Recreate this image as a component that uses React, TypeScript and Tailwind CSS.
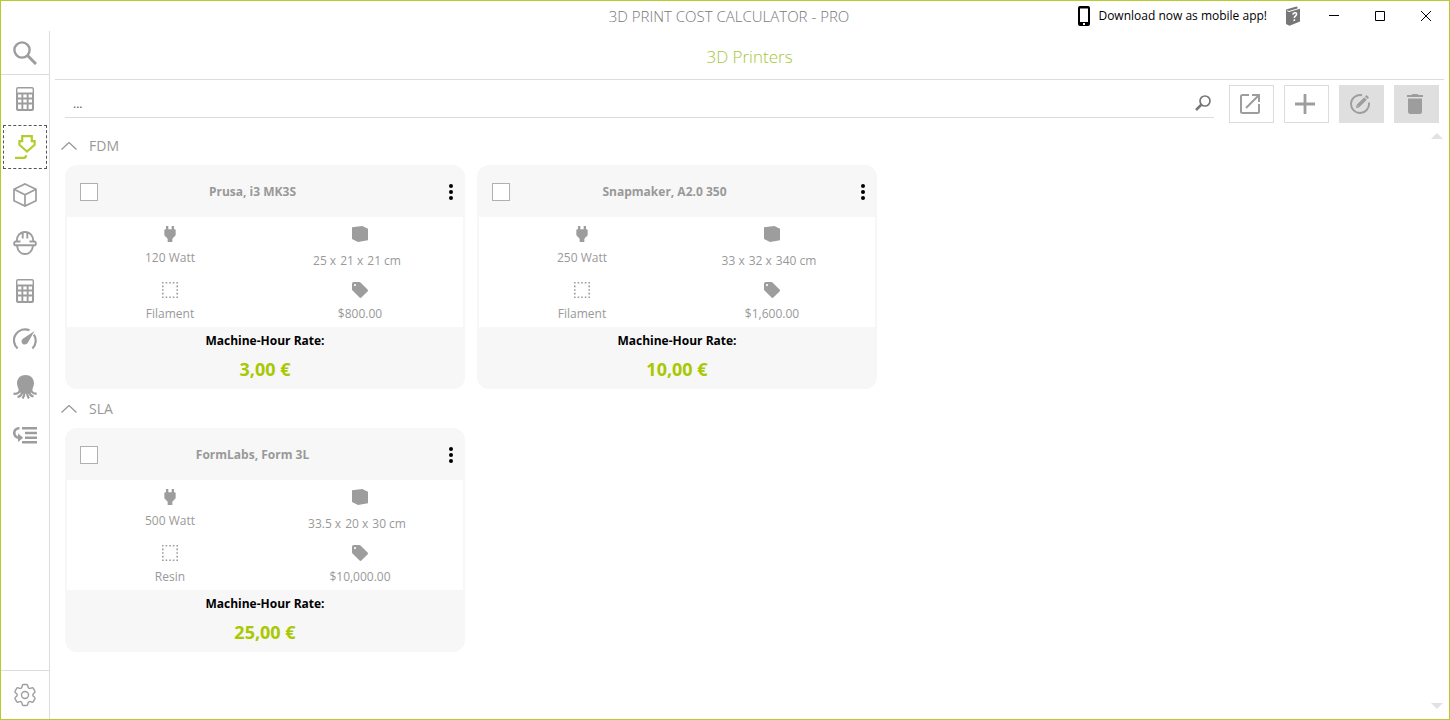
import React from "react";
import { HiOutlineCog6Tooth } from "react-icons/hi2";

interface Printer {
  name: string;
  power: string;
  size: string[];
  material: string;
  price: string;
  rate: string;
}

const groups: { title: string; printers: Printer[] }[] = [
  {
    title: "FDM",
    printers: [
      {
        name: "Prusa, i3 MK3S",
        power: "120 Watt",
        size: ["25 x", "21 x", "21 cm"],
        material: "Filament",
        price: "$800.00",
        rate: "3,00 €",
      },
      {
        name: "Snapmaker, A2.0 350",
        power: "250 Watt",
        size: ["33 x", "32 x", "340 cm"],
        material: "Filament",
        price: "$1,600.00",
        rate: "10,00 €",
      },
    ],
  },
  {
    title: "SLA",
    printers: [
      {
        name: "FormLabs, Form 3L",
        power: "500 Watt",
        size: ["33.5 x", "20 x", "30 cm"],
        material: "Resin",
        price: "$10,000.00",
        rate: "25,00 €",
      },
    ],
  },
];

const Icon = ({
  children,
  className = "size-6",
}: {
  children: React.ReactNode;
  className?: string;
}) => (
  <svg viewBox="0 0 24 24" fill="none" className={className} aria-hidden="true">
    {children}
  </svg>
);

const SearchIcon = () => (
  <Icon>
    <circle cx="9" cy="9" r="7.6" stroke="currentColor" strokeWidth="2.4" />
    <path d="M14.5 14.5 23 23" stroke="currentColor" strokeWidth="3" />
  </Icon>
);

const CalculatorIcon = () => (
  <Icon>
    <path
      fill="currentColor"
      fillRule="evenodd"
      d="M5 0h14a2 2 0 0 1 2 2v20a2 2 0 0 1-2 2H5a2 2 0 0 1-2-2V2a2 2 0 0 1 2-2Zm0 1.4a.6.6 0 0 0-.6.6v3.6h15.2V2a.6.6 0 0 0-.6-.6ZM5 7.5v3h3.4v-3Zm5.3 0v3h3.4v-3Zm5.3 0v3H19v-3ZM5 12.4v3h3.4v-3Zm5.3 0v3h3.4v-3Zm5.3 0v3H19v-3ZM5 17.5V21a1 1 0 0 0 1 1h2.4v-4.5Zm5.3 0V22h3.4v-4.5Zm5.3 0V22H18a1 1 0 0 0 1-1v-3.5Z"
    />
  </Icon>
);

const NozzleIcon = () => (
  <Icon>
    <path
      d="M9.2 1.1h9.600v5h2.800v3.700L14 16.500l-7.600-6.700V6.100h2.800Z"
      stroke="currentColor"
      strokeWidth="2.200"
    />
    <path d="M2 22.900h8.500c1.700 0 2.500-1 2.800-2.700" stroke="currentColor" strokeWidth="2.200" />
  </Icon>
);

const CubeIcon = () => (
  <Icon>
    <path
      d="M12 .9 23 6.2v11.5l-11 5.4-11-5.4V6.2ZM1 6.2l11 5.5 11-5.5M12 11.700v11.400"
      stroke="currentColor"
      strokeWidth="1.700"
    />
  </Icon>
);

const WorkerIcon = () => (
  <Icon>
    <path
      d="M3.600 10.500C3.600 5 7 1 12 1s8.400 4 8.400 9.500M9.700 1.500v6M14.300 1.500v6"
      stroke="currentColor"
      strokeWidth="1.900"
    />
    <path
      d="M7.500 10.500H3c-2.500 0-2.500 3.800 0 3.800h18c2.500 0 2.500-3.800 0-3.800h-4.500M4 14.800c.7 5 3.900 8.200 8 8.200s7.300-3.200 8-8.200"
      stroke="currentColor"
      strokeWidth="1.900"
    />
  </Icon>
);

const GaugeIcon = () => (
  <Icon>
    <path
      d="M4.600 21.500A11 11 0 0 1 16.500 3.300M20.900 7.600a11 11 0 0 1-1.500 13.900"
      stroke="currentColor"
      strokeWidth="2.200"
    />
    <path
      d="M21.500 4 15 15.600c-1 2-3.500 2.600-5.200 1.300-1.700-1.300-1.700-3.900 0-5.200Z"
      fill="currentColor"
    />
  </Icon>
);

const OctopusIcon = () => (
  <Icon>
    <path
      fill="currentColor"
      d="M12.500 0C17.500 0 21 3.500 21 8.200c0 3-1.600 4.500-1.600 6.800l-2.400 3.500h-9L5.600 15C5.600 12.700 4 11.200 4 8.200 4 3.500 7.500 0 12.500 0Z"
    />
    <path
      d="M7 15c-.8 3-3 4.200-6.500 3.700M9.500 16c-.5 3.500-2 5.500-5 6M11.500 16.500c.2 3-.5 5-2 7M14 16.500c-.2 3 .5 5 2 7M16 16c.5 3.500 1.700 5 4.500 5.500M18 15c.8 2.500 2.500 3.900 5.700 3.700"
      stroke="currentColor"
      strokeWidth="2.200"
    />
  </Icon>
);

const QueueIcon = () => (
  <Icon>
    <path
      d="M9 5.300h15M12 10h12M12 14.700h12M9 19.300h15"
      stroke="currentColor"
      strokeWidth="2.600"
    />
    <path d="M6.500 5.300C-.5 4.800-.5 15.200 6.500 14.700" stroke="currentColor" strokeWidth="2.600" />
    <path d="M5 10.500v8.500l5.200-4.200Z" fill="currentColor" />
  </Icon>
);

const navItems = [
  { label: "Calculator", icon: <CalculatorIcon /> },
  { label: "3D Printers", icon: <NozzleIcon />, active: true },
  { label: "Materials", icon: <CubeIcon /> },
  { label: "Workers", icon: <WorkerIcon /> },
  { label: "Calculations", icon: <CalculatorIcon /> },
  { label: "Dashboard", icon: <GaugeIcon /> },
  { label: "OctoPrint", icon: <OctopusIcon /> },
  { label: "Queue", icon: <QueueIcon /> },
];

const TitleBar = () => (
  <header className="grid h-[30px] shrink-0 grid-cols-[1fr_auto_1fr] items-center">
    <span />
    <h1 className="pl-2 text-[15px] font-light text-[#777777]">
      3D PRINT COST CALCULATOR - PRO
    </h1>
    <div className="flex h-full items-center justify-end text-black">
      <a href="#mobile" className="flex items-center gap-2 text-xs">
        <svg viewBox="0 0 12 20" className="h-5 w-3" aria-hidden="true">
          <path
            fill="currentColor"
            fillRule="evenodd"
            d="M2 0h8a2 2 0 0 1 2 2v16a2 2 0 0 1-2 2H2a2 2 0 0 1-2-2V2a2 2 0 0 1 2-2Zm0 2.500v13.500h8V2.500Zm3 14.500v2h2v-2Z"
          />
        </svg>
        Download now as mobile app!
      </a>
      <button aria-label="Help" className="ml-4 flex w-5 justify-center text-[#777777]">
        <svg viewBox="0 0 16 20" className="h-5 w-4" aria-hidden="true">
          <path
            fill="currentColor"
            d="M1 3.500 11.500.5l1 .5v1.500L4 5l-2-.700v.8l2 .8L15 2.800v12.700L4.500 19.800 1 18Z"
          />
          <path
            d="M7.800 8.700c.4-2 3.800-2.800 3.800-.6 0 1.800-2.300 1.700-2.300 4"
            stroke="white"
            strokeWidth="1.500"
            fill="none"
          />
          <path d="m8.500 13.600 1.600-.5v1.600l-1.600.5Z" fill="white" />
        </svg>
      </button>
      <div className="ml-2 flex h-full">
        <button aria-label="Minimize" className="grid h-full w-[46px] place-items-center">
          <svg viewBox="0 0 10 10" className="size-[10px]" stroke="currentColor">
            <path d="M0 4.500h10" />
          </svg>
        </button>
        <button aria-label="Maximize" className="grid h-full w-[46px] place-items-center">
          <svg viewBox="0 0 10 10" className="size-[10px]" stroke="currentColor" fill="none">
            <path d="M.5.5h9v9h-9Z" />
          </svg>
        </button>
        <button aria-label="Close" className="grid h-full w-[46px] place-items-center">
          <svg viewBox="0 0 10 10" className="size-[10px]" stroke="currentColor">
            <path d="m0 0 10 10M10 0 0 10" />
          </svg>
        </button>
      </div>
    </div>
  </header>
);

const Sidebar = () => (
  <nav className="flex w-[49px] shrink-0 flex-col border-r border-[#dcdcdc] text-[#9d9d9d]">
    <button
      aria-label="Search"
      className="grid h-11 place-items-center border-b border-[#dcdcdc]"
    >
      <SearchIcon />
    </button>
    <div className="flex flex-1 flex-col">
      {navItems.map((item) => (
        <button
          key={item.label}
          aria-label={item.label}
          className={
            item.active
              ? "m-[2px] grid h-11 place-items-center border border-dashed border-[#555555] text-[#b5cc2e]"
              : "grid h-12 place-items-center"
          }
        >
          {item.icon}
        </button>
      ))}
    </div>
    <button
      aria-label="Settings"
      className="grid h-[49px] place-items-center border-t border-[#dcdcdc]"
    >
      <HiOutlineCog6Tooth className="size-7" strokeWidth={1.2} />
    </button>
  </nav>
);

const Toolbar = () => (
  <div className="flex items-center gap-[10px] pt-[5px] pr-[10px] pl-[15px]">
    <div className="mr-[5px] flex h-[33px] flex-1 items-center self-start border-b border-[#dcdcdc] pt-1 pr-[3px] pl-1 text-[#777777]">
      <input
        aria-label="Search printers"
        placeholder="..."
        className="min-w-0 flex-1 bg-transparent px-1 pt-[2px] text-xs outline-none placeholder:text-[#555555]"
      />
      <button aria-label="Start search" className="-scale-x-100">
        <svg viewBox="0 0 16 16" className="size-4" fill="none" stroke="currentColor">
          <circle cx="6" cy="6" r="5" strokeWidth="1.700" />
          <path d="m9.500 9.500 5.500 5.500" strokeWidth="2.500" />
        </svg>
      </button>
    </div>
    <button
      aria-label="Export"
      className="grid h-[38px] w-[45px] place-items-center border border-[#dcdcdc] pr-[3px] text-[#9d9d9d]"
    >
      <svg viewBox="0 0 20 20" className="size-5" fill="none" stroke="currentColor">
        <path d="M9 1H2.500Q1 1 1 2.500v15Q1 19 2.500 19h15q1.500 0 1.500-1.500V10" strokeWidth="2" />
        <path d="M12 1h7v7M19 1 6 14" strokeWidth="2" />
      </svg>
    </button>
    <button
      aria-label="Add printer"
      className="grid h-[38px] w-[45px] place-items-center border border-[#dcdcdc] pr-[3px] text-[#9d9d9d]"
    >
      <svg viewBox="0 0 20 20" className="size-5" stroke="currentColor">
        <path d="M10 0v20M0 10h20" strokeWidth="2.800" />
      </svg>
    </button>
    <button
      disabled
      aria-label="Edit printer"
      className="grid h-[38px] w-[45px] place-items-center bg-[#dfdfdf] pr-[3px] text-[#9d9d9d]"
    >
      <svg viewBox="0 0 20 20" className="size-5" fill="none" stroke="currentColor">
        <path d="M12 1.200A9 9 0 1 0 18.900 8.500" strokeWidth="1.900" />
        <path d="m8 12 7.500-7.500" strokeWidth="3.600" />
        <path d="m16.300 3.700 1.400-1.400" strokeWidth="3.600" />
        <path d="m6 14 .6-3.300 2.700 2.700Z" fill="currentColor" stroke="none" />
      </svg>
    </button>
    <button
      disabled
      aria-label="Delete printer"
      className="grid h-[38px] w-[45px] place-items-center bg-[#dfdfdf] pr-[3px] text-[#9d9d9d]"
    >
      <svg viewBox="0 0 16 20" className="h-5 w-4" fill="currentColor">
        <path d="M0 1h4.500l1-1h5l1 1H16v2H0ZM1 4.500h14v13a2.500 2.500 0 0 1-2.500 2.500h-9A2.500 2.500 0 0 1 1 17.500Z" />
      </svg>
    </button>
  </div>
);

const Spec = ({ icon, children }: { icon: React.ReactNode; children: React.ReactNode }) => (
  <div className="flex h-14 flex-col items-center gap-2 pt-[9px] text-xs text-[#999999]">
    {icon}
    {children}
  </div>
);

const PrinterCard = ({ printer }: { printer: Printer }) => (
  <article className="w-[400px] rounded-xl bg-[#f7f7f7] px-[2px]">
    <div className="flex h-[52px] items-center pt-[2px]">
      <input
        type="checkbox"
        aria-label={`Select ${printer.name}`}
        className="ml-[13px] size-[18px] appearance-none border border-[#b0b0b0] bg-white"
      />
      <h3 className="flex-1 pr-8 text-center text-xs font-bold text-[#999999]">
        {printer.name}
      </h3>
      <button aria-label="More options" className="grid h-8 w-6 place-items-center text-black">
        <svg viewBox="0 0 4 16" className="h-4 w-1" fill="currentColor">
          <circle cx="2" cy="2" r="2" />
          <circle cx="2" cy="8" r="2" />
          <circle cx="2" cy="14" r="2" />
        </svg>
      </button>
    </div>
    <div className="grid h-[110px] grid-cols-2 content-start bg-white px-2">
      <Spec
        icon={
          <Icon className="size-4 shrink-0 text-[#9d9d9d]">
            <path
              fill="currentColor"
              d="M6 0h3.500v5h5V0H18v5h1a1.500 1.500 0 0 1 1.500 1.500V14l-5 5v5h-7v-5l-5-5V6.500A1.500 1.500 0 0 1 5 5h1Z"
            />
          </Icon>
        }
      >
        <span>{printer.power}</span>
      </Spec>
      <Spec
        icon={
          <Icon className="size-4 shrink-0 text-[#9d9d9d]">
            <path fill="currentColor" d="M0 2 15.500 0 24 4V21.500L9 24 0 19.500Z" />
          </Icon>
        }
      >
        <span className="flex gap-1 pt-[3px] pr-[6px]">
          {printer.size.map((part, i) => (
            <span key={i}>{part}</span>
          ))}
        </span>
      </Spec>
      <Spec
        icon={
          <Icon className="size-4 shrink-0 text-[#9d9d9d]">
            <path
              d="M0 1.200h24M0 22.800h24M1.200 0v24M22.800 0v24"
              stroke="currentColor"
              strokeWidth="2.400"
              strokeDasharray="2.400 3"
            />
          </Icon>
        }
      >
        <span>{printer.material}</span>
      </Spec>
      <Spec
        icon={
          <Icon className="size-4 shrink-0 text-[#9d9d9d]">
            <path
              fill="currentColor"
              fillRule="evenodd"
              d="M2.500 0H11q1 0 1.800.8L23.300 11.300q1.400 1.400 0 2.800l-9.200 9.200q-1.400 1.400-2.800 0L.8 12.800Q0 12 0 11V2.500Q0 0 2.500 0Zm2 3a1.600 1.600 0 1 0 0 3.200 1.600 1.600 0 0 0 0-3.200Z"
            />
          </Icon>
        }
      >
        <span>{printer.price}</span>
      </Spec>
    </div>
    <div className="flex h-[62px] flex-col items-center pt-[6px]">
      <p className="text-xs font-bold text-black">Machine-Hour Rate:</p>
      <p className="pt-2 text-lg leading-6 font-bold text-[#a8c800]">{printer.rate}</p>
    </div>
  </article>
);

const App = () => {
  return (
    <div className="flex h-screen flex-col border border-[#b5cc2e] bg-white font-['Open_Sans','Noto_Sans',sans-serif]">
      <TitleBar />
      <div className="flex min-h-0 flex-1">
        <Sidebar />
        <main className="flex min-w-0 flex-1 flex-col">
          <h2 className="mx-[5px] flex h-[49px] shrink-0 items-center justify-center border-b border-[#dcdcdc] pt-1 text-[17px] font-light text-[#a4c639]">
            3D Printers
          </h2>
          <Toolbar />
          <div className="mt-[3px] flex min-h-0 flex-1 pr-[5px]">
            <div className="min-w-0 flex-1 overflow-hidden pl-[11px]">
              {groups.map((group) => (
                <section key={group.title}>
                  <button className="flex h-[39px] items-center gap-3 text-sm text-[#999999]">
                    <svg viewBox="0 0 16 8" className="h-2 w-4" fill="none" stroke="currentColor">
                      <path d="m.5 7.500 7.500-7 7.500 7" strokeWidth="1.300" />
                    </svg>
                    {group.title}
                  </button>
                  <div className="flex flex-wrap gap-3 pl-1">
                    {group.printers.map((printer) => (
                      <PrinterCard key={printer.name} printer={printer} />
                    ))}
                  </div>
                </section>
              ))}
            </div>
            <div className="flex w-[15px] flex-col items-center justify-between pt-[7px] pb-[10px] text-[#e2e2e2]">
              <svg viewBox="0 0 12 6" className="h-[6px] w-3" fill="currentColor">
                <path d="m6 0 6 6H0Z" />
              </svg>
              <svg viewBox="0 0 12 6" className="h-[6px] w-3" fill="currentColor">
                <path d="m6 6 6-6H0Z" />
              </svg>
            </div>
          </div>
        </main>
      </div>
    </div>
  );
};

export default App;
